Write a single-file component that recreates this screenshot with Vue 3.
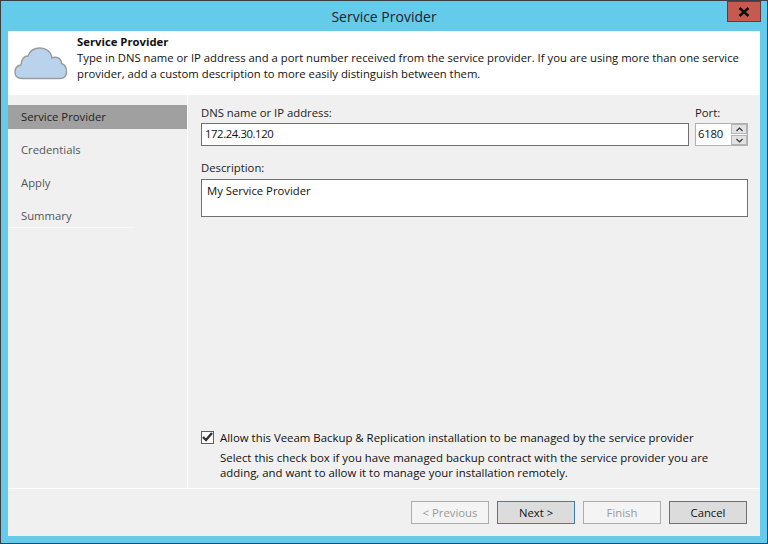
<script setup>
const steps = ['Service Provider', 'Credentials', 'Apply', 'Summary']
</script>

<template>
  <div class="window">
    <div class="titlebar">
      <span class="title">Service Provider</span>
      <button class="close">
        <svg width="12" height="10" viewBox="0 0 12 10"><path d="M1.5 1 L10.5 9 M10.5 1 L1.5 9" stroke="#111" stroke-width="2.6" fill="none"/></svg>
      </button>
    </div>
    <div class="client">
      <header class="header">
        <svg class="cloud" width="54" height="34" viewBox="0 0 54 34">
          <path d="M8 31.5 C3.5 31.5 1 29 1 25 C1 21 3.5 18.5 7 18 C7.5 12 10.5 9 14 9 C16 3.500 21 1 26 1 C32 1 37 4.500 38 11 C39.500 10 41 10 43 10.500 C46 11.500 47.500 14 47.500 16.500 C50.500 17.500 52.500 20.500 52.500 24.500 C52.500 29 50 31.500 46 31.500 Z" fill="#b9d3ec" stroke="#9a9a9a" stroke-width="1.400"/>
        </svg>
        <div class="header-text">
          <h1>Service Provider</h1>
          <p>Type in DNS name or IP address and a port number received from the service provider. If you are using more than one service provider, add a custom description to more easily distinguish between them.</p>
        </div>
      </header>
      <div class="middle">
        <nav class="nav">
          <div v-for="(s, i) in steps" :key="s" class="step" :class="{ active: i === 0 }">{{ s }}</div>
        </nav>
        <main class="main">
          <div class="row">
            <div class="field grow">
              <label>DNS name or IP address:</label>
              <div class="input">172.24.30.120</div>
            </div>
            <div class="field">
              <label>Port:</label>
              <div class="port">
                <div class="port-val">6180</div>
                <div class="spin">
                  <span class="spin-btn"><svg width="7" height="5" viewBox="0 0 7 5"><path d="M.5 4 L3.500 1 L6.500 4" stroke="#333" stroke-width="1.200" fill="none"/></svg></span>
                  <span class="spin-btn"><svg width="7" height="5" viewBox="0 0 7 5"><path d="M.5 1 L3.500 4 L6.500 1" stroke="#333" stroke-width="1.200" fill="none"/></svg></span>
                </div>
              </div>
            </div>
          </div>
          <div class="field desc">
            <label>Description:</label>
            <div class="textarea">My Service Provider</div>
          </div>
          <div class="spacer"></div>
          <div class="check-row">
            <span class="checkbox">
              <svg width="11" height="10" viewBox="0 0 11 10"><path d="M1 5 L4 8 L10 1" stroke="#333" stroke-width="2.400" fill="none"/></svg>
            </span>
            <span>Allow this Veeam Backup &amp; Replication installation to be managed by the service provider</span>
          </div>
          <p class="hint">Select this check box if you have managed backup contract with the service provider you are adding, and want to allow it to manage your installation remotely.</p>
        </main>
      </div>
      <footer class="footer">
        <button class="btn disabled">&lt; Previous</button>
        <button class="btn primary">Next &gt;</button>
        <button class="btn disabled">Finish</button>
        <button class="btn">Cancel</button>
      </footer>
    </div>
  </div>
</template>

<style>
html, body { margin: 0; padding: 0; }
</style>

<style scoped>
.window {
  width: 768px;
  height: 544px;
  box-sizing: border-box;
  border: 1px solid #3a3f44;
  background: #65cbeb;
  padding: 0 7px 7px;
  display: flex;
  flex-direction: column;
  font-family: "Open Sans", "Noto Sans", sans-serif;
  font-size: 11.3px;
  color: #111;
  overflow: hidden;
}
.titlebar {
  height: 30px;
  flex: none;
  display: flex;
  justify-content: center;
  align-items: center;
  position: relative;
}
.title { font-size: 14px; color: #222; }
.close {
  position: absolute;
  right: -1px;
  top: 0;
  width: 34px;
  height: 21px;
  padding: 0;
  background: #c75a50;
  border: 1px solid #5a4038;
  display: flex;
  align-items: center;
  justify-content: center;
}
.client {
  flex: 1;
  min-height: 0;
  background: #f0f0f0;
  display: flex;
  flex-direction: column;
}
.header {
  height: 64px;
  flex: none;
  background: #fff;
  display: flex;
  box-sizing: border-box;
  padding: 14px 16px 0 6px;
  gap: 9px;
}
.cloud { flex: none; margin-top: 2px; }
.header-text { margin-top: -11px; }
h1 { margin: 0; font-size: 11.3px; font-weight: 700; line-height: 16px; color: #111; }
.header-text p { margin: 0; line-height: 15.5px; }
.middle { flex: 1; min-height: 0; display: flex; border-bottom: 1px solid #fff; }
.nav {
  width: 179px;
  flex: none;
  border-right: 1px solid #fff;
  padding-top: 10px;
  box-sizing: content-box;
}
.step {
  height: 33px;
  line-height: 24px;
  padding-left: 13px;
  color: #555;
}
.step.active {
  height: 24px;
  background: #a0a0a0;
  color: #222;
  margin-bottom: 9px;
}
.step:last-child { height: 23px; border-bottom: 1px solid #f8f8f8; width: 113px; }
.main {
  flex: 1;
  min-width: 0;
  display: flex;
  flex-direction: column;
  padding: 9px 12px 8px 13px;
}
.row { display: flex; gap: 6px; }
.field { display: flex; flex-direction: column; }
.grow { flex: 1; }
label { line-height: 17px; height: 19px; color: #222; }
.input {
  height: 23px;
  box-sizing: border-box;
  border: 1px solid #707070;
  background: #fff;
  padding-left: 3px;
  line-height: 20px;
  letter-spacing: -0.4px;
}
.port {
  width: 53px;
  height: 23px;
  box-sizing: border-box;
  border: 1px solid #b0b0b0;
  background: #fff;
  display: flex;
  justify-content: space-between;
}
.port-val { padding-left: 2px; line-height: 20px; letter-spacing: -0.2px; }
.spin { width: 16px; display: flex; flex-direction: column; gap: 1px; }
.spin-btn {
  flex: 1;
  background: #e2e2e2;
  border: 1px solid #b4b4b8;
  display: flex;
  align-items: center;
  justify-content: center;
}
.desc { margin-top: 13px; }
.desc label { height: 20px; }
.textarea {
  height: 38px;
  box-sizing: border-box;
  border: 1px solid #707070;
  background: #fff;
  padding-left: 5px;
  line-height: 21px;
}
.spacer { flex: 1; }
.check-row { display: flex; align-items: center; gap: 6px; height: 16px; font-size: 11.4px; }
.checkbox {
  width: 13px;
  height: 13px;
  box-sizing: border-box;
  border: 1px solid #606060;
  background: #fff;
  display: flex;
  align-items: center;
  justify-content: center;
  flex: none;
}
.hint { margin: 5px 0 0 19px; line-height: 15px; font-size: 11.4px; max-width: 495px; }
.footer {
  height: 47px;
  flex: none;
  display: flex;
  justify-content: flex-end;
  align-items: flex-start;
  gap: 8px;
  padding: 12px 13px 0 0;
  box-sizing: border-box;
}
.btn {
  width: 78px;
  height: 23px;
  padding: 0;
  font: inherit;
  background: #dcdcdc;
  border: 1px solid #707070;
  color: #111;
}
.btn.primary { border-color: #3c7fb1; }
.btn.disabled { background: #f4f4f4; border-color: #adadad; color: #999; }
</style>
